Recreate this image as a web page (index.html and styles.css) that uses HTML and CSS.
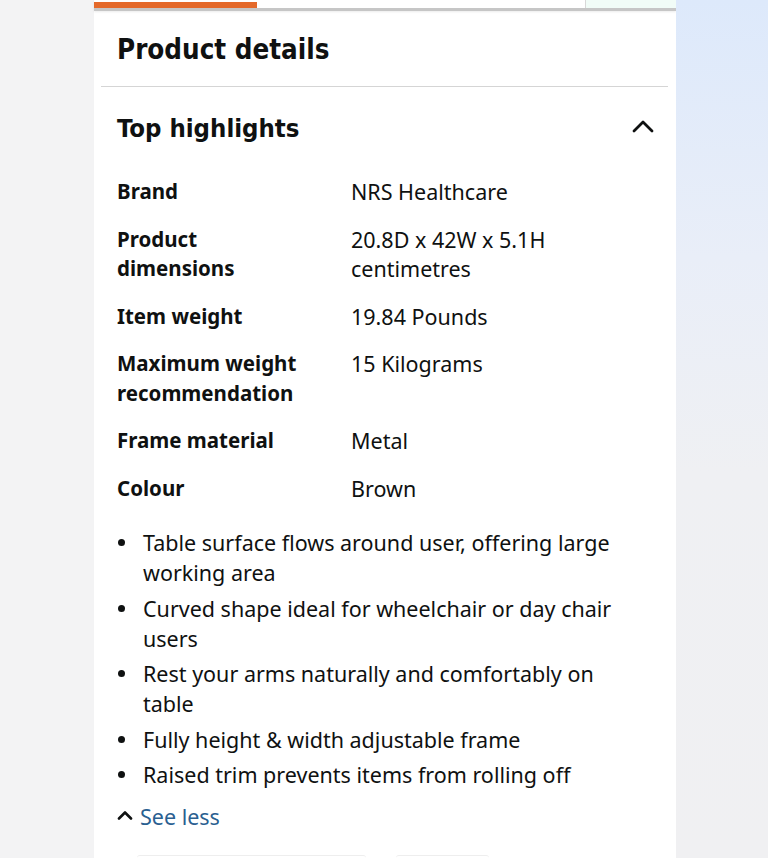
FILE: index.html
```html
<!DOCTYPE html>
<html lang="en">
<head>
    <meta charset="UTF-8">
    <meta name="viewport" content="width=device-width, initial-scale=1.0">
    <title>Product details</title>
    <link rel="stylesheet" href="styles.css">
</head>
<body>
    <div class="page">
        <div class="gutter gutter-left"></div>

        <main class="card">
            <div class="tabs">
                <div class="tab-active"></div>
                <div class="tab-spacer"></div>
                <div class="tab-side"></div>
            </div>

            <h1 class="title">Product details</h1>
            <hr class="divider">

            <section class="highlights">
                <div class="section-head">
                    <h2>Top highlights</h2>
                    <svg class="chevron" width="22" height="14" viewBox="0 0 22 14">
                        <path d="M2 12 L11 3 L20 12" fill="none" stroke="#0f1111" stroke-width="2.8" stroke-linecap="round" stroke-linejoin="round"/>
                    </svg>
                </div>

                <dl class="specs">
                    <div class="spec">
                        <dt>Brand</dt>
                        <dd>NRS Healthcare</dd>
                    </div>
                    <div class="spec">
                        <dt>Product dimensions</dt>
                        <dd>20.8D x 42W x 5.1H centimetres</dd>
                    </div>
                    <div class="spec">
                        <dt>Item weight</dt>
                        <dd>19.84 Pounds</dd>
                    </div>
                    <div class="spec">
                        <dt>Maximum weight recommendation</dt>
                        <dd>15 Kilograms</dd>
                    </div>
                    <div class="spec">
                        <dt>Frame material</dt>
                        <dd>Metal</dd>
                    </div>
                    <div class="spec">
                        <dt>Colour</dt>
                        <dd>Brown</dd>
                    </div>
                </dl>

                <ul class="bullets">
                    <li>Table surface flows around user, offering large working area</li>
                    <li>Curved shape ideal for wheelchair or day chair users</li>
                    <li>Rest your arms naturally and comfortably on table</li>
                    <li>Fully height &amp; width adjustable frame</li>
                    <li>Raised trim prevents items from rolling off</li>
                </ul>

                <a class="see-less" href="#">
                    <svg width="16" height="10" viewBox="0 0 16 10">
                        <path d="M2 8.5 L8 2.5 L14 8.5" fill="none" stroke="#0f1111" stroke-width="2.6" stroke-linecap="round" stroke-linejoin="round"/>
                    </svg>
                    See less
                </a>
            </section>

            <div class="footer-buttons">
                <span class="ghost ghost-wide"></span>
                <span class="ghost ghost-small"></span>
            </div>
        </main>

        <div class="gutter gutter-right"></div>
    </div>
</body>
</html>
```

FILE: styles.css
```css
* {
    box-sizing: border-box;
}

html, body {
    margin: 0;
    padding: 0;
    height: 100%;
}

body {
    font-family: "Noto Sans", "Liberation Sans", sans-serif;
    color: #0f1111;
    background: #f2f2f3;
    overflow: hidden;
}

.page {
    display: flex;
    height: 858px;
}

.gutter-left {
    width: 94px;
    background: #f3f3f4;
}

.gutter-right {
    flex: 1;
    background: linear-gradient(180deg, #dde9fb 0%, #e9eef8 30%, #eff0f3 55%, #f0f0f2 100%);
}

.card {
    width: 582px;
    background: #fff;
    display: flex;
    flex-direction: column;
}

/* top tab strip */
.tabs {
    display: flex;
    height: 11px;
    border-bottom: 3px solid #c6c6c6;
    box-shadow: 0 1px 2px rgba(0,0,0,0.08);
}

.tab-active {
    width: 163px;
    height: 6px;
    margin-top: 2px;
    background: #e4692a;
}

.tab-spacer {
    width: 328px;
}

.tab-side {
    flex: 1;
    background: #f1fcf7;
    border-left: 1px solid #d8d8d8;
}

.title {
    margin: 20px 0 19px 23px;
    font-family: "DejaVu Sans Condensed", "Noto Sans", sans-serif;
    font-size: 27.5px;
    line-height: 36px;
    font-weight: bold;
}

.divider {
    margin: 0 8px 0 7px;
    border: none;
    border-top: 1px solid #d5d5d5;
}

.highlights {
    padding: 24px 22px 0 23px;
}

.section-head {
    display: flex;
    justify-content: space-between;
    align-items: center;
}

.section-head h2 {
    margin: 0;
    font-family: "DejaVu Sans Condensed", "Noto Sans", sans-serif;
    font-size: 25.5px;
    line-height: 35px;
    font-weight: bold;
}

.chevron {
    margin-top: -6px;
}

.specs {
    margin: 31px 0 0;
    display: flex;
    flex-direction: column;
    gap: 18px;
}

.spec {
    display: grid;
    grid-template-columns: 234px 1fr;
    font-size: 21.5px;
    line-height: 29.5px;
}

.spec dt {
    font-weight: bold;
    font-size: 20.5px;
    padding-right: 40px;
}

.spec dd {
    margin: 0;
    padding-right: 60px;
}

.bullets {
    list-style: none;
    margin: 25px 0 0;
    padding: 0 20px 0 0;
    display: flex;
    flex-direction: column;
    gap: 5.5px;
    font-size: 21.5px;
    line-height: 30px;
}

.bullets li {
    position: relative;
    padding-left: 26px;
}

.bullets li::before {
    content: "";
    position: absolute;
    left: 1px;
    top: 11px;
    width: 7px;
    height: 7px;
    border-radius: 50%;
    background: #0f1111;
}

.see-less {
    display: inline-flex;
    align-items: center;
    gap: 7px;
    margin-top: 12px;
    font-size: 21.5px;
    line-height: 30px;
    color: #2a6091;
    text-decoration: none;
}

.see-less svg {
    margin-top: -4px;
}

.footer-buttons {
    display: flex;
    gap: 30px;
    margin-top: auto;
    padding-left: 43px;
    height: 3px;
}

.ghost {
    border-top: 1px solid #eeeeee;
    border-radius: 6px 6px 0 0;
}

.ghost-wide {
    width: 229px;
}

.ghost-small {
    width: 93px;
}
```
